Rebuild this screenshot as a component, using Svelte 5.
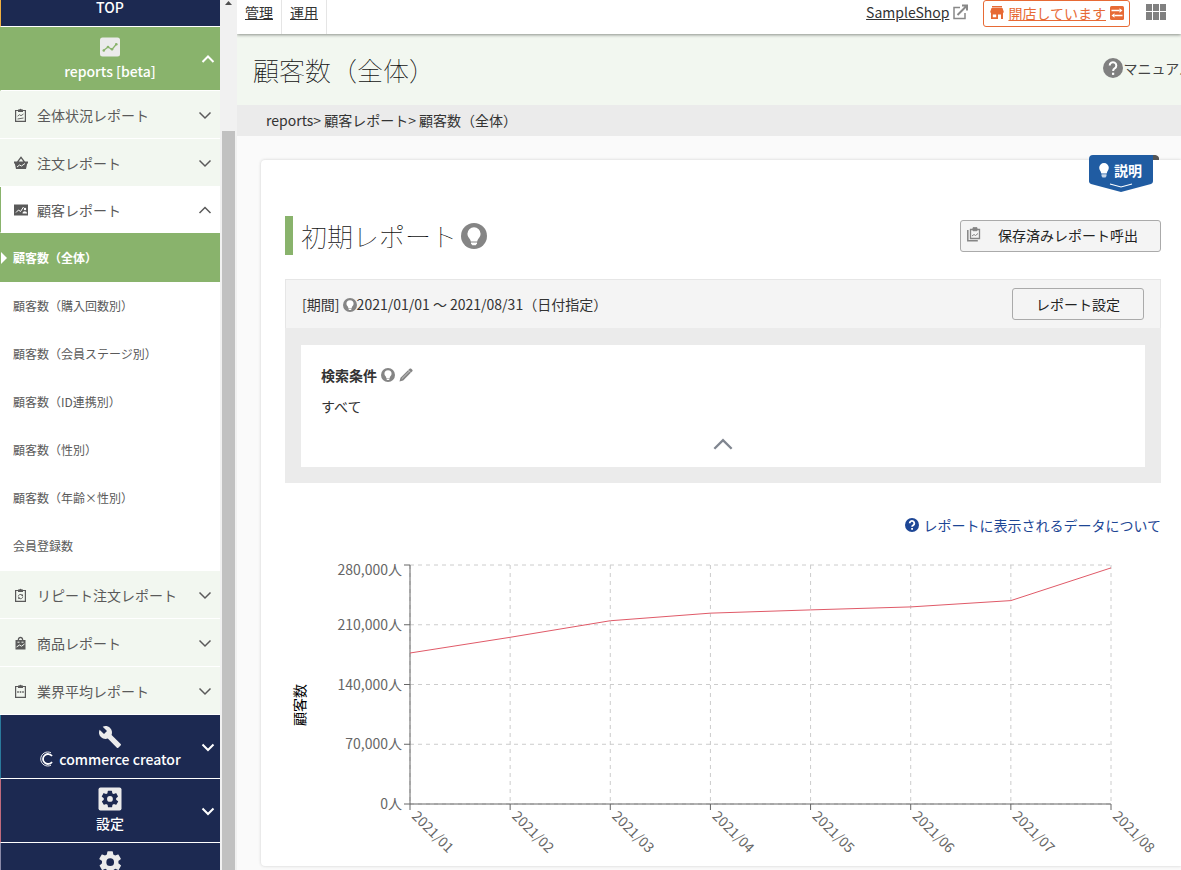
<script>
	const reports = [
		{ label: '全体状況レポート', icon: 'clipboard-chart' },
		{ label: '注文レポート', icon: 'basket' },
		{
			label: '顧客レポート',
			icon: 'customer',
			open: true,
			children: [
				'顧客数（全体）',
				'顧客数（購入回数別）',
				'顧客数（会員ステージ別）',
				'顧客数（ID連携別）',
				'顧客数（性別）',
				'顧客数（年齢×性別）',
				'会員登録数'
			]
		},
		{ label: 'リピート注文レポート', icon: 'clipboard-repeat' },
		{ label: '商品レポート', icon: 'bag' },
		{ label: '業界平均レポート', icon: 'clipboard-dots' }
	];

	const customers = [
		{ month: '2021/01', count: 176900 },
		{ month: '2021/02', count: 195300 },
		{ month: '2021/03', count: 214700 },
		{ month: '2021/04', count: 223600 },
		{ month: '2021/05', count: 227400 },
		{ month: '2021/06', count: 230900 },
		{ month: '2021/07', count: 238300 },
		{ month: '2021/08', count: 276600 }
	];
	const yTicks = [0, 70000, 140000, 210000, 280000];
	const plot = { left: 125, right: 50, top: 25, height: 239 };

	let current = $state('顧客数（全体）');
	let conditionOpen = $state(true);
	let chartWidth = $state(876);

	let plotRight = $derived(chartWidth - plot.right);
	let plotBottom = plot.top + plot.height;
	let points = $derived(customers.map((c, i) => `${x(i)},${y(c.count)}`).join(' '));

	function x(i) {
		return plot.left + ((plotRight - plot.left) * i) / (customers.length - 1);
	}

	function y(value) {
		return plotBottom - (plot.height * value) / 280000;
	}
</script>

{#snippet chevron(up, size = 14)}
	<svg class="chevron" width={size} height={size} viewBox="0 0 14 14" aria-hidden="true">
		<path d={up ? 'M1.5 10 7 4.5l5.5 5.5' : 'M1.5 4.5 7 10l5.5-5.5'} />
	</svg>
{/snippet}

{#snippet clipboard()}
	<path d="M1.600 2.500h9.800v10.900H1.600z" fill="none" stroke="currentColor" stroke-width="1.200" />
	<path d="M4 1.500h1.300a1.400 1.400 0 0 1 2.400 0H9v2.600H4z" fill="currentColor" />
{/snippet}

{#snippet bulb(size)}
	<svg width={size} height={size} viewBox="0 0 26 26" aria-hidden="true">
		<circle cx="13" cy="13" r="13" fill="#858585" />
		<path d="M13 4.2a6.600 6.600 0 0 0-6.600 6.600c0 2.600 1.600 3.900 2.700 5.600.4.700.6 1.300.7 2h6.400c.1-.7.3-1.300.7-2 1.100-1.700 2.700-3 2.700-5.600A6.600 6.600 0 0 0 13 4.200z" fill="#fff" />
		<path d="M10 19.400h6v1l-1.300 1.800h-3.400L10 20.400z" fill="#fff" />
	</svg>
{/snippet}

{#snippet gear()}
	<path
		d="M19.400 13c0-.3.1-.6.1-1s0-.7-.1-1l2.100-1.700c.2-.1.2-.4.1-.6l-2-3.500c-.1-.2-.4-.3-.6-.2l-2.500 1c-.5-.4-1.100-.7-1.700-1l-.4-2.600a.5.5 0 0 0-.5-.4h-4a.5.5 0 0 0-.5.4l-.4 2.600c-.6.3-1.200.6-1.700 1l-2.500-1c-.2-.1-.5 0-.6.2l-2 3.500c-.1.200-.1.500.1.600L4.600 11c0 .3-.1.600-.1 1s0 .7.1 1l-2.100 1.700c-.2.1-.2.400-.1.600l2 3.500c.1.200.4.300.6.200l2.500-1c.5.400 1.100.7 1.700 1l.4 2.600c0 .2.200.4.500.4h4c.3 0 .5-.2.5-.4l.4-2.600c.6-.3 1.200-.6 1.700-1l2.500 1c.2.1.5 0 .6-.2l2-3.500c.1-.2.1-.5-.1-.6zM12 15.500a3.500 3.500 0 1 1 0-7 3.500 3.500 0 0 1 0 7z"
		fill-rule="evenodd"
	/>
{/snippet}

{#snippet reportIcon(name)}
	<svg class="report-icon" width="14" height="14" viewBox="0 0 14 14" aria-hidden="true">
		{#if name === 'basket'}
			<path d="M0 5.500h3L7 .3l4 5.200h3v2h-.8L12 13H2L.8 7.500H0zM7 2.400 4.700 5.500h4.600z" fill="currentColor" fill-rule="evenodd" />
			<path d="M3 11l2.500-2 2 1L11 7.500" fill="none" stroke="#f2f7f0" />
		{:else if name === 'customer'}
			<path d="M0 1.500h14v11H0z" fill="currentColor" />
			<path d="M2 9.500 4.500 7l2 1.500L9.500 4" fill="none" stroke="#fff" />
			<circle cx="11" cy="6" r="1.200" fill="#fff" />
			<path d="M8.500 10.500c0-3 4.500-3 4.500 0z" fill="#fff" />
		{:else if name === 'bag'}
			<path d="M1.500 4h2.200C3.700-.3 9.300-.3 9.300 4h2.200v9.500h-10zM5 4h3C8 1.600 5 1.600 5 4z" fill="currentColor" fill-rule="evenodd" />
			<path d="M3.500 6.200h2M7.500 6.200h2M2.500 11l3-2 2 1.200L10.500 8" fill="none" stroke="#f2f7f0" />
		{:else}
			{@render clipboard()}
			{#if name === 'clipboard-chart'}
				<path d="M3.500 8.200 5.500 6.700l1.500 1L9.500 6M3.500 11l6-1" fill="none" stroke="currentColor" stroke-width=".9" />
			{:else if name === 'clipboard-repeat'}
				<path d="M4.300 8.500a2.200 2.200 0 0 1 3.800-1.400M8.700 8.500a2.200 2.200 0 0 1-3.800 1.600" fill="none" stroke="currentColor" stroke-width=".9" />
				<path d="M9 6v2H7zM4 11.200v-2h2z" fill="currentColor" />
			{:else}
				<path d="M3.200 8h1.600M5.700 8h1.600M8.200 8h1.600" stroke="currentColor" stroke-width="1.500" />
			{/if}
		{/if}
	</svg>
{/snippet}

<div class="page">
	<aside class="sidebar">
		<nav>
			<a href="#top" class="section top">TOP</a>
			<button class="section active">
				<svg width="20" height="20" viewBox="0 0 20 20" aria-hidden="true">
					<rect width="20" height="19" y=".5" rx="2.500" fill="#ebebeb" />
					<path d="M3.500 13.500 8 10l4 2.500L16.500 7" fill="none" stroke="#89b36c" stroke-width="1.300" />
					<g fill="#89b36c">
						<circle cx="3.800" cy="13.500" r="1.300" /><circle cx="8" cy="10" r="1.300" />
						<circle cx="12" cy="12.300" r="1.300" /><circle cx="16.300" cy="7.200" r="1.300" />
					</g>
				</svg>
				<span>reports [beta]</span>
				{@render chevron(true)}
			</button>

			{#each reports as report}
				<button class="report" class:open={report.open}>
					{@render reportIcon(report.icon)}
					<span>{report.label}</span>
					{@render chevron(report.open)}
				</button>
				{#if report.children}
					<ul>
						{#each report.children as child}
							<li>
								<a href="#{child}" class:current={child === current} onclick={() => (current = child)}>{child}</a>
							</li>
						{/each}
					</ul>
				{/if}
			{/each}

			<button class="section creator">
				<svg width="24" height="24" viewBox="0 0 24 24" fill="#ebebeb" aria-hidden="true">
					<path d="M22.700 19l-9.100-9.100c.9-2.300.4-5-1.500-6.900-2-2-5-2.400-7.400-1.300L9 6 6 9 1.600 4.700C.4 7.100.9 10.100 2.900 12.100c1.900 1.900 4.600 2.400 6.900 1.500l9.100 9.100c.4.4 1 .4 1.400 0l2.300-2.300c.5-.4.5-1.100.1-1.400z" />
				</svg>
				<span class="with-logo">
					<svg width="15" height="16" viewBox="0 0 15 16" fill="none" stroke="#fff" aria-hidden="true">
						<path d="M12 1.800A7 7 0 1 0 12 14.200" stroke-width=".9" />
						<path d="M13 5A5 5 0 1 0 13 11" stroke-width="1.800" />
					</svg>
					commerce creator
				</span>
				{@render chevron(false)}
			</button>
			<button class="section setting">
				<svg width="24" height="24" viewBox="0 0 24 24" aria-hidden="true">
					<rect x=".5" y=".5" width="23" height="23" rx="2" fill="#ebebeb" />
					<g fill="#1c2951" transform="translate(2 2) scale(.83)">{@render gear()}</g>
				</svg>
				<span>設定</span>
				{@render chevron(false)}
			</button>
			<button class="section system" aria-label="システム設定">
				<svg width="24" height="24" viewBox="0 0 24 24" fill="#ebebeb" aria-hidden="true">
					<g transform="translate(-1 -1) scale(1.100)">{@render gear()}</g>
				</svg>
			</button>
		</nav>
		<div class="scrollbar">
			<svg width="7" height="4" viewBox="0 0 7 4" aria-hidden="true"><path d="M0 4 3.500 0 7 4z" fill="#505050" /></svg>
			<div class="thumb"></div>
		</div>
	</aside>

	<main>
		<header>
			<a href="#manage" class="tab">管理</a>
			<a href="#operate" class="tab">運用</a>
			<div class="shop">
				<a href="#shop">SampleShop</a>
				<svg width="15" height="16" viewBox="0 0 15 16" fill="none" stroke="#888" stroke-width="1.500" aria-hidden="true">
					<path d="M7 3.500H1v11h11V9" />
					<path d="M4.500 11 13 2.500M9 1.500h5v5" stroke-width="2" />
				</svg>
			</div>
			<a href="#status" class="status">
				<svg width="14" height="13" viewBox="0 0 14 13" fill="#e76a35" aria-hidden="true">
					<path d="M2 0h10v1.500H2zM1.500 2h11L14 6.500H0z" />
					<path d="M1 6h12v7h-2V8.500H8V13H1zM2.800 8.500v2.800h3.400V8.500z" fill-rule="evenodd" />
				</svg>
				<span>開店しています</span>
				<svg width="14" height="14" viewBox="0 0 14 14" aria-hidden="true">
					<rect width="14" height="14" rx="1.500" fill="#e76a35" />
					<path d="M1.500 4.500h8M12.500 9.500h-8" stroke="#fff" stroke-width="1.400" />
					<path d="M9.500 2.300 12.500 4.500 9.500 6.700zM4.500 7.300 1.500 9.500 4.500 11.700z" fill="#fff" />
				</svg>
			</a>
			<button class="apps" aria-label="メニュー">
				<svg width="20" height="16" viewBox="0 0 20 16" fill="#808080" aria-hidden="true">
					<path d="M0 0h6v7H0zM7 0h6v7H7zM14 0h6v7h-6zM0 8h6v8H0zM7 8h6v8H7zM14 8h6v8h-6z" />
				</svg>
			</button>
		</header>

		<div class="page-title">
			<h1>顧客数（全体）</h1>
			<a href="#manual" class="manual">
				<svg width="20" height="20" viewBox="0 0 20 20" aria-hidden="true">
					<circle cx="10" cy="10" r="10" fill="#808080" />
					<path d="M6.700 7.500a3.300 3.300 0 1 1 5 2.800c-1 .7-1.600 1.200-1.600 2.700" fill="none" stroke="#fff" stroke-width="2" />
					<path d="M9 14.700h2.200v2.200H9z" fill="#fff" />
				</svg>
				マニュアル
			</a>
		</div>
		<div class="breadcrumb">reports&gt; 顧客レポート&gt; 顧客数（全体）</div>

		<section class="card">
			<button class="guide">
				<svg class="ribbon" width="70" height="38" viewBox="0 0 70 38" aria-hidden="true">
					<path d="M60 0h6a4 4 0 0 1 4 5H60z" fill="#555" />
					<path d="M4 0h60v26a3 3 0 0 1-2 3L32 37 2 29a3 3 0 0 1-2-3V4a4 4 0 0 1 4-4z" fill="#205ca2" />
					<path d="M21 29l11 3 11-3" fill="none" stroke="#fff" stroke-width="1.200" />
				</svg>
				<svg width="10" height="15" viewBox="0 0 10 15" fill="#fff" aria-hidden="true">
					<path d="M5 0a4.800 4.800 0 0 0-4.800 4.800C.2 7 1.800 8 2.300 10.500h5.400C8.200 8 9.800 7 9.800 4.800A4.800 4.800 0 0 0 5 0z" />
					<path d="M2.500 11.200h5V13l-1 1.500h-3l-1-1.500z" opacity=".75" />
				</svg>
				<span>説明</span>
			</button>

			<div class="report-head">
				<h2>初期レポート {@render bulb(26)}</h2>
				<button class="btn saved">
					<svg width="14" height="15" viewBox="0 0 14 15" fill="none" stroke="#858585" aria-hidden="true">
						<path d="M3.500 2.500h9v9h-9z" stroke-width="1.300" />
						<path d="M.8 3v10.800h10" stroke-width="1.500" />
						<path d="M6 .7h4v3H6z" fill="#858585" />
						<path d="M5 9l2-1.500L8.500 8.500l2.500-2" />
					</svg>
					<span>保存済みレポート呼出</span>
				</button>
			</div>

			<div class="filter">
				<div class="period">
					<p>[期間] {@render bulb(14)}2021/01/01 ～ 2021/08/31（日付指定）</p>
					<button class="btn">レポート設定</button>
				</div>
				<div class="conditions">
					<h3>
						検索条件
						{@render bulb(14)}
						<svg width="14" height="14" viewBox="0 0 15 15" aria-hidden="true">
							<path d="M.5 14.500 1.600 10.500 11 1.200l.8-.7h1L14.500 2.200v1L4.500 13.300z" fill="#858585" />
							<path d="M3 11.500 11 3.500M10 2.300l2.700 2.700" stroke="#ddd" stroke-width=".8" />
						</svg>
					</h3>
					<p class:hidden={!conditionOpen}>すべて</p>
					<button class="toggle" aria-label="検索条件の開閉" onclick={() => (conditionOpen = !conditionOpen)}>
						{@render chevron(conditionOpen, 22)}
					</button>
				</div>
			</div>

			<a href="#about-data" class="about">
				<svg width="14" height="14" viewBox="0 0 20 20" aria-hidden="true">
					<circle cx="10" cy="10" r="10" fill="#1d4695" />
					<path d="M6.700 7.500a3.300 3.300 0 1 1 5 2.800c-1 .7-1.600 1.200-1.600 2.200" fill="none" stroke="#fff" stroke-width="2.600" />
					<path d="M8.800 14.200h2.600v2.600H8.800z" fill="#fff" />
				</svg>
				レポートに表示されるデータについて
			</a>

			<div class="chart" bind:clientWidth={chartWidth}>
				<svg width={chartWidth} height="326" role="img" aria-label="顧客数の推移">
					<g class="grid">
						{#each yTicks as tick}
							<line x1={plot.left} x2={plotRight} y1={y(tick)} y2={y(tick)} />
						{/each}
						{#each customers as _, i}
							<line x1={x(i)} x2={x(i)} y1={plot.top} y2={plotBottom} />
						{/each}
					</g>
					<g class="axis">
						<path d="M{plot.left} {plot.top}V{plotBottom}H{plotRight}" />
						{#each yTicks as tick}
							<line x1={plot.left - 6} x2={plot.left} y1={y(tick)} y2={y(tick)} />
						{/each}
						{#each customers as _, i}
							<line x1={x(i)} x2={x(i)} y1={plotBottom} y2={plotBottom + 6} />
						{/each}
					</g>
					<g class="labels">
						{#each yTicks as tick}
							<text x={plot.left - 8} y={Math.max(y(tick), plot.top + 5) + 5} text-anchor="end">{tick.toLocaleString('en-US')}人</text>
						{/each}
						{#each customers as c, i}
							<text transform="translate({x(i) + 1} {plotBottom + 13}) rotate(45)">{c.month}</text>
						{/each}
					</g>
					<text class="axis-title" transform="translate(20 165) rotate(-90)" text-anchor="middle">顧客数</text>
					<polyline {points} />
				</svg>
			</div>
		</section>
	</main>
</div>

<style>
	:global(body) {
		margin: 0;
		overflow: hidden;
		background: #fafafa;
		color: #333;
		font-family: 'Noto Sans CJK JP', 'Noto Sans', sans-serif;
		font-size: 14px;
		line-height: 20px;
	}

	h1, h2, h3, p, ul {
		margin: 0;
		padding: 0;
	}

	button {
		border: 0;
		padding: 0;
		background: none;
		color: inherit;
		font: inherit;
		cursor: pointer;
	}

	svg {
		flex: none;
	}

	.page {
		display: flex;
		height: 100vh;
		overflow: hidden;
	}

	/* sidebar */
	.sidebar {
		display: flex;
		flex: none;
		height: 100vh;
		overflow: hidden;
	}

	nav {
		width: 220px;
		background: #fff;
	}

	.section {
		position: relative;
		display: flex;
		flex-direction: column;
		align-items: center;
		justify-content: center;
		gap: 4px;
		box-sizing: border-box;
		width: 100%;
		height: 64px;
		padding-right: 1px;
		border-bottom: 1px solid #fff;
		border-left: 1px solid #1c2951;
		background: #1c2951;
		color: #fff;
		font-weight: 500;
		text-decoration: none;
	}

	.section.top {
		justify-content: flex-end;
		height: 27px;
		padding-bottom: 9px;
		border-left-color: #f0b040;
	}

	.section.active {
		border-left-color: #89b36c;
		background: #89b36c;
	}

	.section.creator {
		gap: 0;
		border-left-color: #2a7a9c;
	}

	.section.setting {
		gap: 2px;
		padding-bottom: 2px;
		border-left-color: #c06a7c;
	}

	.section.system {
		justify-content: flex-start;
		padding-top: 7px;
		border-left-color: #8a8aa8;
	}

	.section .chevron {
		position: absolute;
		right: 5px;
		top: 25px;
		stroke-width: 2;
	}

	.with-logo {
		display: flex;
		align-items: center;
		gap: 5px;
	}

	.chevron {
		fill: none;
		stroke: currentColor;
		stroke-width: 1.5;
	}

	.report {
		display: flex;
		align-items: center;
		gap: 9px;
		box-sizing: border-box;
		width: 100%;
		height: 48px;
		padding: 0 8px 0 14px;
		border-bottom: 1px solid #fff;
		background: #f2f7f0;
		color: #5a5a5a;
	}

	.report span {
		flex: 1;
		text-align: left;
	}

	.report.open {
		height: 46px;
		padding-left: 13px;
		border-left: 1px solid #89b36c;
		background: #fff;
	}

	ul {
		padding-bottom: 1px;
		list-style: none;
	}

	li a {
		display: flex;
		align-items: center;
		height: 48px;
		padding-left: 13px;
		color: #5a5a5a;
		font-size: 12px;
		text-decoration: none;
	}

	li a.current {
		position: relative;
		height: 49px;
		background: #89b36c;
		color: #fff;
		font-weight: 700;
	}

	li a.current::before {
		content: '';
		position: absolute;
		left: 1px;
		border: 6px solid transparent;
		border-right: 0;
		border-left-color: #fff;
	}

	.scrollbar {
		display: flex;
		flex-direction: column;
		align-items: center;
		justify-content: space-between;
		width: 17px;
		padding-top: 1px;
		background: #f1f1f1;
	}

	.thumb {
		width: 13px;
		height: 85%;
		background: #c1c1c1;
	}

	/* main column */
	main {
		flex: 1;
		min-width: 0;
		overflow: hidden;
	}

	header {
		position: relative;
		display: flex;
		align-items: flex-start;
		height: 34px;
		background: #fff;
		box-shadow: 0 1px 3px #8a8f88;
	}

	header a {
		color: #333;
	}

	.tab {
		height: 32px;
		padding: 2px 8px 0;
		border-right: 1px solid #e5e5e5;
	}

	.shop {
		display: flex;
		align-items: center;
		gap: 4px;
		margin: 2px 15px 0 auto;
	}

	header .status {
		display: flex;
		align-items: center;
		gap: 4px;
		box-sizing: border-box;
		height: 27px;
		padding: 0 5px 2px 6px;
		border: 1px solid #e76a35;
		border-radius: 3px;
		color: #e76a35;
		text-decoration: none;
	}

	.status span {
		text-decoration: underline;
	}

	.apps {
		display: flex;
		margin: 4px 15px 0 16px;
	}

	.page-title {
		display: flex;
		align-items: center;
		justify-content: space-between;
		height: 71px;
		padding-left: 16px;
		background: #f2f7f0;
	}

	h1, h2 {
		color: #111;
		font-size: 26px;
		font-weight: 100;
		line-height: 38px;
	}

	.manual {
		display: flex;
		align-items: center;
		margin-right: -12px;
		padding-bottom: 3px;
		color: #444;
		text-decoration: none;
		white-space: nowrap;
	}

	.breadcrumb {
		padding: 5px 29px 6px;
		background: #ebebeb;
	}

	.card {
		position: relative;
		margin: 24px 0 0 24px;
		padding: 56px 20px 0 24px;
		border-radius: 4px 0 0 4px;
		background: #fff;
		box-shadow: 0 0 3px #ccc;
	}

	.guide {
		position: absolute;
		top: -5px;
		right: 22px;
		display: flex;
		align-items: center;
		gap: 5px;
		width: 70px;
		height: 30px;
		padding-left: 10px;
		color: #fff;
		font-weight: 700;
	}

	.ribbon {
		position: absolute;
		top: 0;
		left: 0;
	}

	.guide :not(.ribbon) {
		position: relative;
	}

	.report-head {
		display: flex;
		align-items: center;
		justify-content: space-between;
	}

	h2 {
		display: flex;
		align-items: center;
		gap: 4px;
		padding-top: 1px;
		padding-left: 8px;
		border-left: 8px solid #89b36c;
	}

	.btn {
		box-sizing: border-box;
		height: 32px;
		padding: 0 23px 1px;
		border: 1px solid #aaa;
		border-radius: 3px;
		background: #f4f4f4;
		color: #222;
	}

	.btn.saved {
		display: flex;
		align-items: center;
		gap: 17px;
		padding: 0 22px 2px 6px;
	}

	.filter {
		margin-top: 24px;
		padding-bottom: 16px;
		background: #ebebeb;
	}

	.period {
		display: flex;
		align-items: center;
		justify-content: space-between;
		height: 48px;
		padding: 0 16px;
		border: 1px solid #e6e6e6;
		border-bottom: 0;
		background: #f4f4f4;
	}

	.period svg {
		vertical-align: -2px;
	}

	.conditions {
		margin: 17px 16px 0;
		padding: 20px 20px 12px;
		background: #fff;
	}

	h3 {
		display: flex;
		align-items: center;
		gap: 4px;
		font-size: 14px;
		font-weight: 700;
	}

	.conditions p {
		padding-top: 11px;
	}

	.conditions p.hidden {
		display: none;
	}

	.toggle {
		display: flex;
		margin: 17px auto 0;
		color: #808690;
	}

	.about {
		display: flex;
		align-items: center;
		justify-content: flex-end;
		gap: 4px;
		margin-top: 32px;
		color: #1d4695;
		text-decoration: none;
	}

	/* chart */
	.chart {
		padding-top: 5px;
	}

	.chart svg {
		display: block;
	}

	.grid line {
		stroke: #ccc;
		stroke-dasharray: 4 4;
	}

	.axis path,
	.axis line {
		fill: none;
		stroke: #666;
	}

	.labels text {
		fill: #666;
	}

	.axis-title {
		fill: #000;
	}

	polyline {
		fill: none;
		stroke: #e05a68;
	}
</style>
